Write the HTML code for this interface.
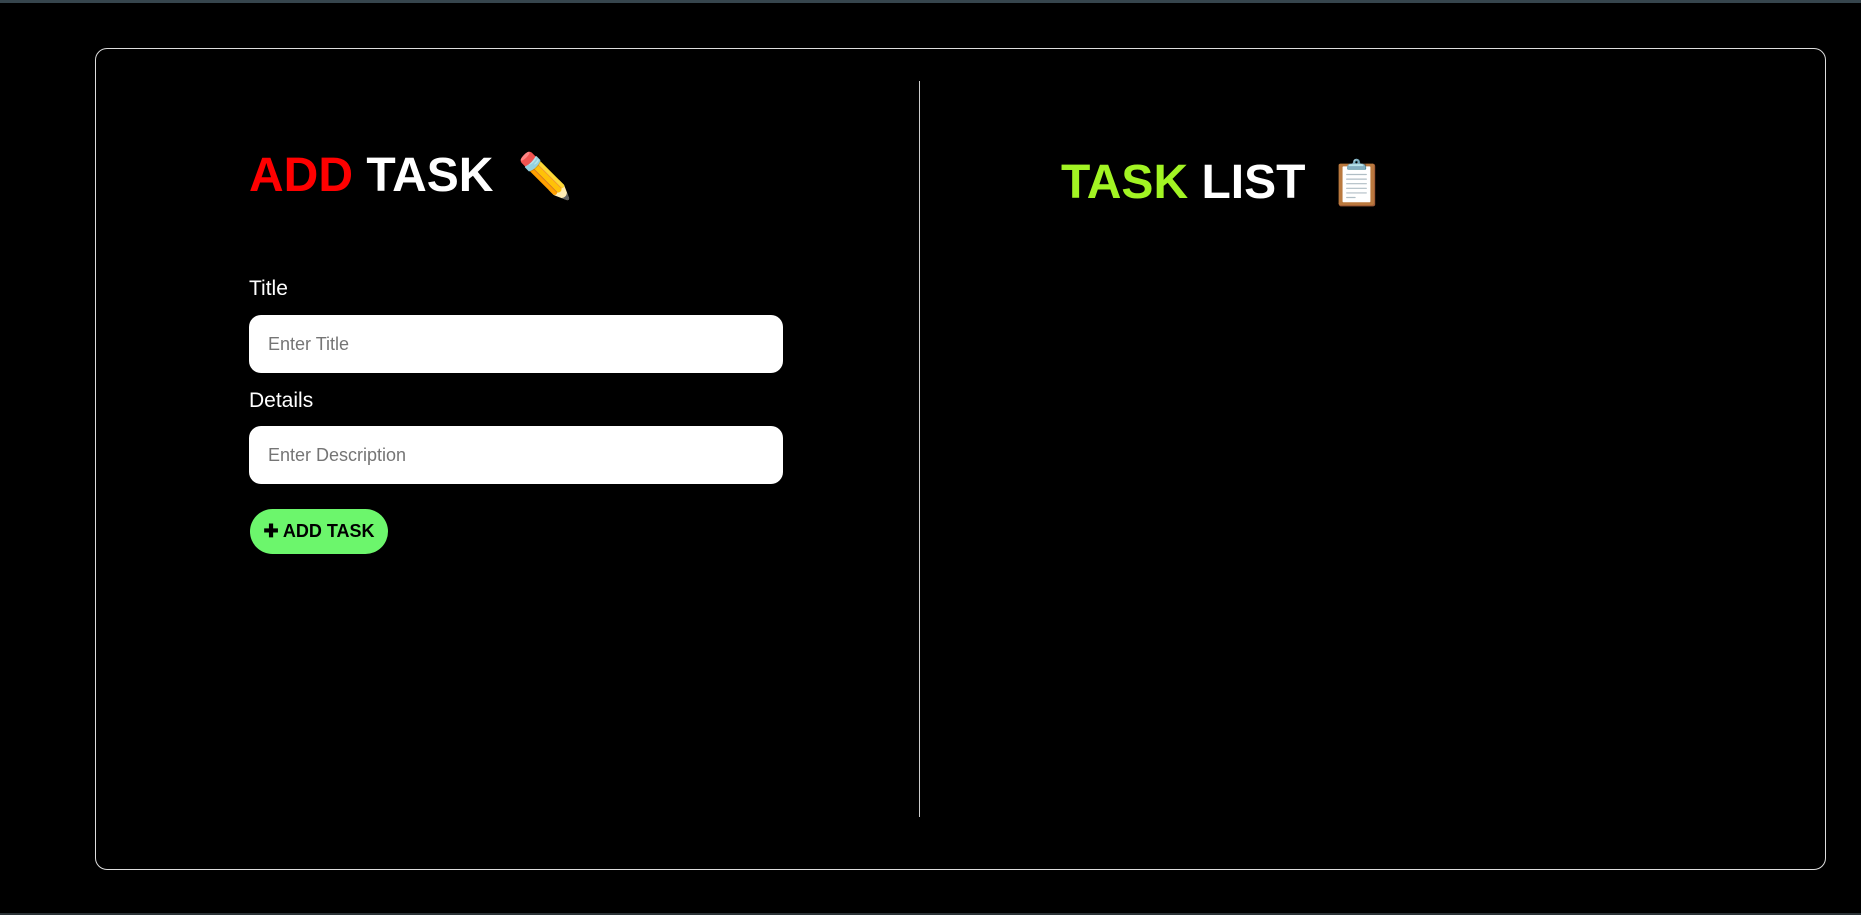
<!DOCTYPE html>
<html><head><meta charset="utf-8"><style>
html,body{margin:0;padding:0;background:#000;width:1861px;height:915px;overflow:hidden;font-family:"Liberation Sans",Arial,sans-serif;}
.topbar{position:absolute;left:0;top:0;width:1861px;height:3px;background:#36454d;}
.botbar{position:absolute;left:0;bottom:0;width:1861px;height:2px;background:#2a3236;}
.box{position:absolute;left:95px;top:48px;width:1731px;height:822px;border:1px solid #ddd;border-radius:12px;box-sizing:border-box;}
.div{position:absolute;left:919px;top:81px;width:1px;height:736px;background:#ccc;}
h1{position:absolute;margin:0;font-size:48px;font-weight:bold;color:#fff;white-space:nowrap;line-height:1;}
.em{font-size:44px;margin-left:12px;}
.lbl{position:absolute;left:249px;color:#fff;font-size:21px;}
.inp{position:absolute;left:249px;width:534px;height:58px;background:#fff;border-radius:12px;color:#757575;font-size:18px;line-height:58px;padding-left:19px;box-sizing:border-box;}
.btn{position:absolute;left:250px;top:509px;width:138px;height:45px;border-radius:23px;background:#6cf66c;color:#000;font-weight:bold;font-size:18px;line-height:45px;text-align:center;}
</style></head><body>
<div class="topbar"></div>
<div class="box"></div>
<div class="div"></div>
<h1 style="left:249px;top:152px;"><span style="color:#ff0000">ADD</span> TASK<span class="em"> ✏️</span></h1>
<h1 style="left:1061px;top:159px;"><span style="color:#a2f423">TASK</span> LIST<span class="em"> 📋</span></h1>
<div class="lbl" style="top:277px;">Title</div>
<div class="inp" style="top:315px;">Enter Title</div>
<div class="lbl" style="top:389px;">Details</div>
<div class="inp" style="top:426px;">Enter Description</div>
<div class="btn">✚ ADD TASK</div>
<div class="botbar"></div>
</body></html>
